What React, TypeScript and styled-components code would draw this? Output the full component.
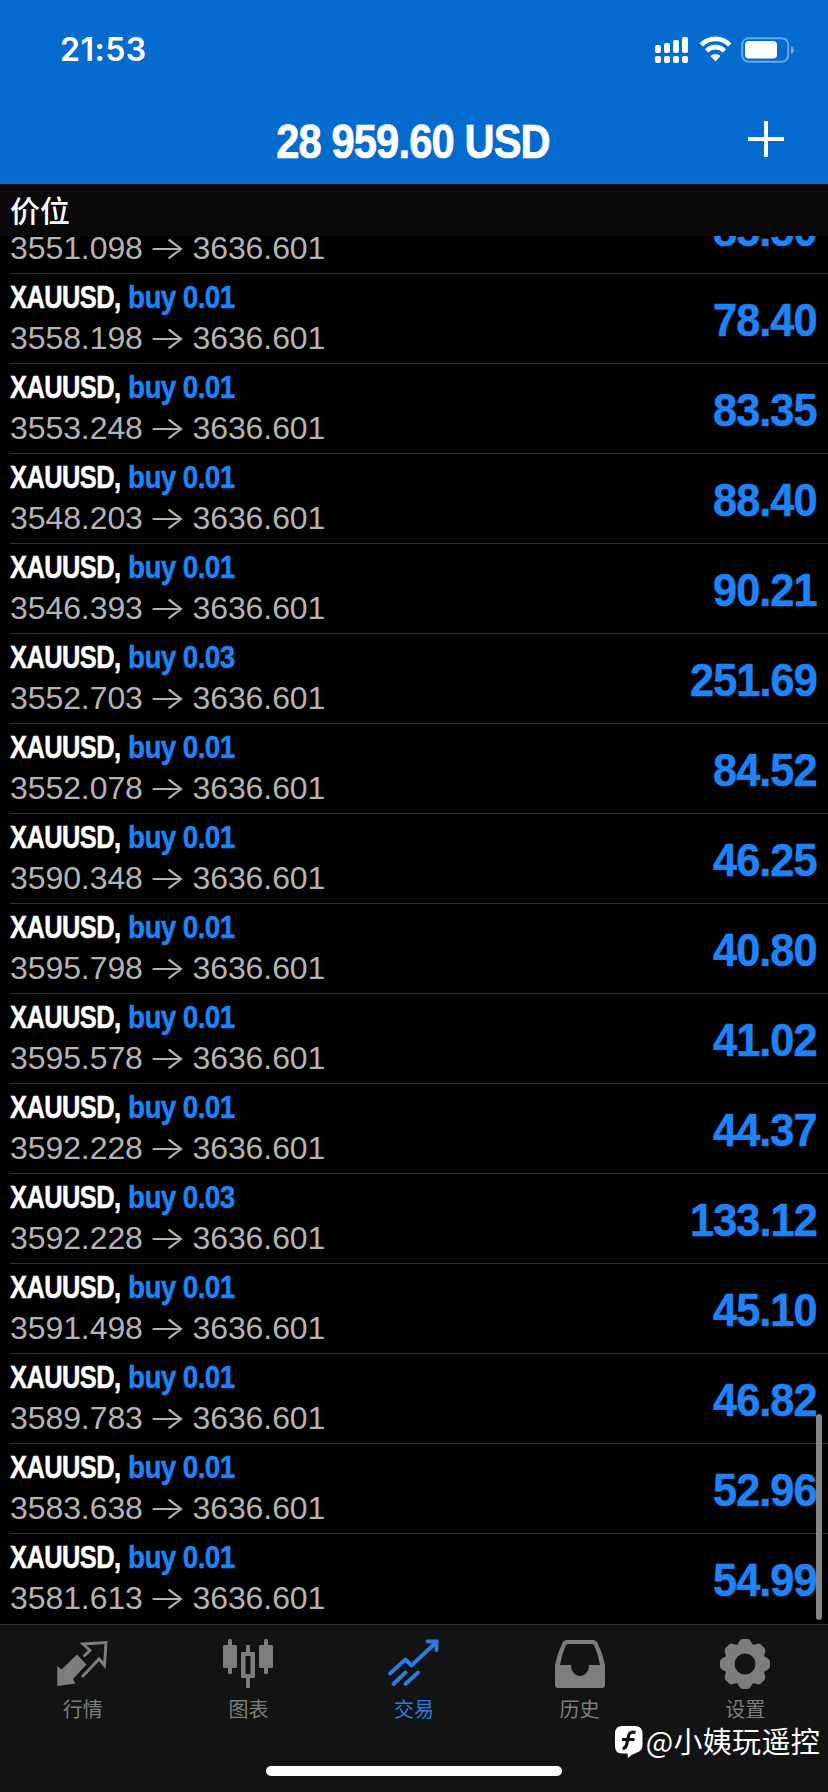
import React from "react";
import styled, { createGlobalStyle } from "styled-components";

const BLUE = "#1f83f7";
const GREY = "#7d7d7d";
const SANS = '"Liberation Sans", "Noto Sans CJK SC", sans-serif';

const GlobalStyle = createGlobalStyle`
  * { box-sizing: border-box; }
  body { margin: 0; background: #000; }
`;

const Screen = styled.div`
  position: relative;
  display: flex;
  flex-direction: column;
  width: 828px;
  height: 1792px;
  overflow: hidden;
  background: #000;
  color: #fff;
  font-family: ${SANS};
`;

const Header = styled.header`
  height: 184px;
  flex: none;
  background: #066bcf;
`;

const StatusBar = styled.div`
  display: flex;
  justify-content: space-between;
  align-items: center;
  height: 100px;
  padding: 0 33px 0 60px;
`;

const Clock = styled.span`
  font: 560 32px/40px Inter, sans-serif;
  letter-spacing: 0.5px;
`;

const StatusIcons = styled.svg`
  width: 142px;
  height: 30px;
`;

const TitleBar = styled.div`
  display: grid;
  grid-template-columns: 100px 1fr 100px;
  align-items: center;
  height: 84px;
`;

const Balance = styled.h1`
  grid-column: 2;
  margin: 0;
  text-align: center;
  font: 700 48px/60px ${SANS};
  letter-spacing: -1px;
  -webkit-text-stroke: 0.7px currentColor;
  white-space: nowrap;
  transform: translateX(-1px) scaleX(0.868);
`;

const AddButton = styled.button`
  display: flex;
  align-items: center;
  justify-content: center;
  width: 36px;
  height: 36px;
  margin: 0 0 6px 20px;
  padding: 0;
  border: 0;
  background: none;
  color: #fff;
`;

const SectionTitle = styled.h2`
  flex: none;
  height: 52px;
  margin: 0;
  padding: 0 10px;
  background: #080808;
  font: 500 30px/50px "Noto Sans CJK SC", sans-serif;
`;

const List = styled.main`
  flex: none;
  display: flex;
  flex-direction: column;
  justify-content: flex-end;
  height: 1388px;
  overflow: hidden;
`;

const Row = styled.article`
  flex: none;
  display: flex;
  align-items: center;
  justify-content: space-between;
  height: 90px;
  margin-left: 10px;
  padding-right: 10px;
  border-bottom: 1px solid #303030;

  &:last-child { border-bottom-color: transparent; }
`;

const Deal = styled.div`
  display: flex;
  flex-direction: column;
  padding-bottom: 2px;
`;

const Heading = styled.div<{ $hidden?: boolean }>`
  display: flex;
  height: 41px;
  font: 700 32px/42px ${SANS};
  letter-spacing: -0.7px;
  -webkit-text-stroke: 0.5px currentColor;
  white-space: nowrap;
  visibility: ${(p) => (p.$hidden ? "hidden" : "visible")};
`;

const Instrument = styled.span`
  width: 118px;
  transform: scaleX(0.795);
  transform-origin: left;
`;

const Side = styled.span`
  color: ${BLUE};
  transform: scaleX(0.87);
  transform-origin: left;
`;

const Prices = styled.div`
  font: 400 32px/42px ${SANS};
  letter-spacing: -0.08px;
  color: #b4b4b4;
  white-space: nowrap;
`;

const Arrow = styled.span`
  display: inline-block;
  width: 32px;
  font-family: Inter, sans-serif;
  font-weight: 300;
  transform: scaleX(1.28);
`;

const Profit = styled.div`
  padding-top: 3px;
  font: 700 47px/60px ${SANS};
  letter-spacing: -1px;
  -webkit-text-stroke: 0.6px currentColor;
  color: ${BLUE};
  transform: translateX(-1px) scaleX(0.92);
  transform-origin: right;
`;

const ScrollThumb = styled.div`
  position: absolute;
  right: 6px;
  top: 1414px;
  width: 6px;
  height: 206px;
  border-radius: 3px;
  background: #858585;
`;

const TabBar = styled.nav`
  flex: none;
  display: grid;
  grid-template-columns: repeat(5, 1fr);
  height: 168px;
  padding-top: 11px;
  border-top: 1px solid #303030;
  background: #131313;
`;

const Tab = styled.a<{ $active?: boolean }>`
  display: flex;
  flex-direction: column;
  align-items: center;
  gap: 4px;
  height: 90px;
  color: ${(p) => (p.$active ? "#2b7de0" : GREY)};
`;

const TabIcon = styled.svg`
  width: 54px;
  height: 54px;
`;

const TabLabel = styled.span`
  font: 400 20px/30px "Noto Sans CJK SC", sans-serif;
`;

const HomeIndicator = styled.div`
  position: absolute;
  left: 266px;
  bottom: 16px;
  width: 296px;
  height: 10px;
  border-radius: 5px;
  background: #fff;
`;

const Watermark = styled.div`
  position: absolute;
  right: 8px;
  top: 1719px;
  display: flex;
  align-items: center;
  font: 400 29px/42px "Noto Sans CJK SC", sans-serif;
  letter-spacing: 0.3px;
  white-space: nowrap;
`;

const WatermarkLogo = styled.svg`
  width: 29px;
  height: 34px;
  margin: 4px 3px 0 0;
`;

const deals = [
  ["0.01", "3551.098", "85.50"],
  ["0.01", "3558.198", "78.40"],
  ["0.01", "3553.248", "83.35"],
  ["0.01", "3548.203", "88.40"],
  ["0.01", "3546.393", "90.21"],
  ["0.03", "3552.703", "251.69"],
  ["0.01", "3552.078", "84.52"],
  ["0.01", "3590.348", "46.25"],
  ["0.01", "3595.798", "40.80"],
  ["0.01", "3595.578", "41.02"],
  ["0.01", "3592.228", "44.37"],
  ["0.03", "3592.228", "133.12"],
  ["0.01", "3591.498", "45.10"],
  ["0.01", "3589.783", "46.82"],
  ["0.01", "3583.638", "52.96"],
  ["0.01", "3581.613", "54.99"],
];

const gearTooth = "M-8.5 -18 L-5.8 -22.6 Q-4.6 -25 -2.5 -25 H2.5 Q4.6 -25 5.8 -22.6 L8.5 -18 Z";

const tabs = [
  {
    label: "行情",
    icon: (
      <>
        <path d="M1.300 30 L5.500 33.500 L21 18.500 L30.500 28.500 L17 43 L19.500 47.500 L1.300 50 Z" fill="currentColor" />
        <path d="M27.500 20.500 L34 14.500 L27 8 L50 6.500 L48.500 29.500 L43 23 L26 41" fill="none" stroke="currentColor" strokeWidth="2.900" />
      </>
    ),
  },
  {
    label: "图表",
    icon: (
      <g fill="currentColor">
        <rect x="2" y="9" width="14" height="23" rx="1.500" />
        <rect x="7" y="3" width="4" height="35" rx="1.500" />
        <rect x="38" y="9" width="14" height="23" rx="1.500" />
        <rect x="43" y="3" width="4" height="35" rx="1.500" />
        <rect x="25" y="9" width="4" height="8" rx="1" />
        <rect x="25" y="41" width="4" height="11" rx="1" />
        <path fillRule="evenodd" d="M20 17 Q20 16 21 16 H33 Q34 16 34 17 V41 Q34 42 33 42 H21 Q20 42 20 41 Z M24.500 20 V38 H29.500 V20 Z" />
      </g>
    ),
  },
  {
    label: "交易",
    active: true,
    icon: (
      <g fill="none" stroke="currentColor" strokeWidth="3.900" strokeLinecap="round">
        <path d="M3 37.500 L18.500 23.500 L24.500 29.500 L49 6.500" strokeLinejoin="round" />
        <path d="M40.500 5.500 H49.500 V14" />
        <path d="M6.500 48 L18.500 36.500 M18.500 48 L31 36.500" />
      </g>
    ),
  },
  {
    label: "历史",
    icon: (
      <path
        fill="currentColor"
        fillRule="evenodd"
        d="M2 29 Q4 18 9 8 Q10.500 4 14 4 H40 Q43.500 4 45 8 Q50 18 52 29 V49 Q52 52 49 52 H5 Q2 52 2 49 Z M12.500 10 Q8.500 19 7 29 H18.200 V31 A8.800 9 0 0 0 35.800 31 V29 H47 Q45.500 19 41.500 10 Q40.500 8 38.500 8 H15.500 Q13.500 8 12.500 10 Z"
      />
    ),
  },
  {
    label: "设置",
    icon: (
      <g transform="translate(27 28)" fill="currentColor">
        <path fillRule="evenodd" d="M0 -20.500 A20.500 20.500 0 1 0 0 20.500 A20.500 20.500 0 1 0 0 -20.500 Z M0 -10.500 A10.500 10.500 0 1 1 0 10.500 A10.500 10.500 0 1 1 0 -10.500 Z" />
        {[0, 45, 90, 135, 180, 225, 270, 315].map((a) => (
          <path key={a} d={gearTooth} transform={`rotate(${a})`} />
        ))}
      </g>
    ),
  },
];

export default function App() {
  return (
    <Screen>
      <GlobalStyle />
      <Header>
        <StatusBar>
          <Clock>21:53</Clock>
          <StatusIcons viewBox="0 0 142 30">
            <g fill="#fff">
              {[0, 9, 18, 27].map((x, i) => {
                const top = [10, 8, 5, 2][i];
                return (
                  <React.Fragment key={x}>
                    <rect x={2 + x} y={top} width="6" height={18 - top} rx="2" />
                    <rect x={2 + x} y="21" width="6" height="7" rx="2" />
                  </React.Fragment>
                );
              })}
            </g>
            <g fill="none" stroke="#fff" strokeWidth="4.600">
              <path d="M48.300 9.800 A20 20 0 0 1 76.700 9.800" />
              <path d="M53.600 15.800 A12.500 12.500 0 0 1 71.400 15.800" />
            </g>
            <path d="M57.500 21 Q62.500 17 67.500 21 L62.500 26.500 Z" fill="#fff" />
            <rect x="89.200" y="3.200" width="46" height="23.600" rx="6.500" fill="none" stroke="#6aa6e8" strokeWidth="2" />
            <rect x="92" y="6" width="32" height="17.500" rx="4" fill="#fff" />
            <path d="M138 11 Q141 12 141 15 Q141 18 138 19 Z" fill="#6aa6e8" />
          </StatusIcons>
        </StatusBar>
        <TitleBar>
          <Balance>28 959.60 USD</Balance>
          <AddButton aria-label="+">
            <svg width="36" height="36" viewBox="0 0 36 36">
              <path d="M18 0 V36 M0 18 H36" stroke="currentColor" strokeWidth="4" />
            </svg>
          </AddButton>
        </TitleBar>
      </Header>
      <SectionTitle>价位</SectionTitle>
      <List>
        {deals.map(([volume, open, profit], i) => (
          <Row key={i}>
            <Deal>
              <Heading $hidden={i === 0}>
                <Instrument>XAUUSD,</Instrument>
                <Side>buy {volume}</Side>
              </Heading>
              <Prices>
                {open} <Arrow>→</Arrow> 3636.601
              </Prices>
            </Deal>
            <Profit>{profit}</Profit>
          </Row>
        ))}
      </List>
      <TabBar>
        {tabs.map((t) => (
          <Tab key={t.label} $active={t.active}>
            <TabIcon viewBox="0 0 54 54">{t.icon}</TabIcon>
            <TabLabel>{t.label}</TabLabel>
          </Tab>
        ))}
      </TabBar>
      <ScrollThumb />
      <HomeIndicator />
      <Watermark>
        <WatermarkLogo viewBox="0 0 29 34">
          <path d="M8 1 H21 Q28.500 1 28.500 9 V20 Q28.500 26 22 28 Q17 29.500 14 33 L13.500 28.500 H8 Q1 28.500 1 21 V9 Q1 1 8 1 Z" fill="#fff" />
          <path d="M21.500 7.500 Q15.500 6 14.500 11 L12.500 20 Q11.500 23.500 8.500 23.500 M8 14.500 H20.500" fill="none" stroke="#131313" strokeWidth="3.200" />
        </WatermarkLogo>
        @小姨玩遥控
      </Watermark>
    </Screen>
  );
}
